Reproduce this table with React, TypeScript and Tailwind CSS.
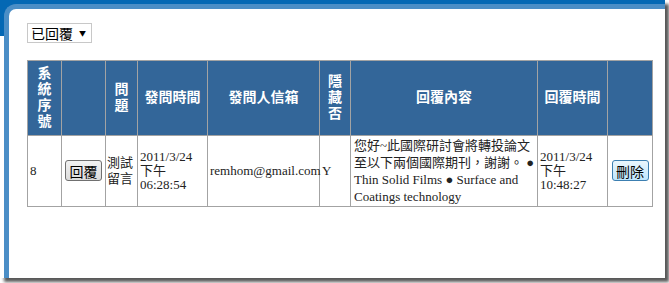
import React from "react";

const serif = "font-['Liberation_Serif','Noto_Sans_CJK_TC',serif]";

function HeadCell({ children, className = "" }: { children?: React.ReactNode; className?: string }) {
  return (
    <th className={`border border-[#a3a3a3] bg-[#336699] text-white font-bold text-[14px] leading-[16px] text-center align-middle px-[1px] ${className}`}>
      {children}
    </th>
  );
}

function Cell({ children, className = "" }: { children?: React.ReactNode; className?: string }) {
  return (
    <td className={`border border-[#a3a3a3] align-middle px-[2px] text-[13px] text-[#222] ${className}`}>
      {children}
    </td>
  );
}

export default function App() {
  return (
    <div className={`w-[669px] h-[283px] bg-white ${serif}`}>
      <div className="w-[665px] h-[278px] pt-[4px] pl-[4px] bg-[linear-gradient(#0468b4_0px,#0468b4_36px,#ffffff_36px)] shadow-[4px_4px_3px_rgba(0,0,0,0.65)]">
        <div className="h-full w-full border-l-[5px] border-t-[5px] border-[#4b8ec6] rounded-tl-[12px] bg-white pl-[18px] pt-[14px]">
          <div className="w-[65px] h-[20px] border border-[#c8c8c8] flex items-center justify-between pl-[3px] pr-[5px] font-['Noto_Sans_CJK_TC',sans-serif] text-[14px] leading-none text-black">
            <span>已回覆</span>
            <span className="text-[7px]">▼</span>
          </div>

          <table className="mt-[17px] table-fixed border-collapse w-[625px]">
            <colgroup>
              <col className="w-[34px]" />
              <col className="w-[44px]" />
              <col className="w-[32px]" />
              <col className="w-[70px]" />
              <col className="w-[112px]" />
              <col className="w-[31px]" />
              <col className="w-[187px]" />
              <col className="w-[70px]" />
              <col className="w-[45px]" />
            </colgroup>
            <thead>
              <tr className="h-[75px]">
                <HeadCell>系<br />統<br />序<br />號</HeadCell>
                <HeadCell />
                <HeadCell>問<br />題</HeadCell>
                <HeadCell>發問時間</HeadCell>
                <HeadCell>發問人信箱</HeadCell>
                <HeadCell>隱<br />藏<br />否</HeadCell>
                <HeadCell>回覆內容</HeadCell>
                <HeadCell>回覆時間</HeadCell>
                <HeadCell />
              </tr>
            </thead>
            <tbody>
              <tr className="h-[71px]">
                <Cell>8</Cell>
                <Cell className="text-center">
                  <button className="w-[37px] h-[21px] rounded-[3px] border border-[#707070] bg-[linear-gradient(#f2f2f2,#dcdcdc)] text-[14px] leading-none text-black font-['Noto_Sans_CJK_TC',sans-serif]">
                    回覆
                  </button>
                </Cell>
                <Cell className="leading-[16px] !px-[1px]">測試<br />留言</Cell>
                <Cell className="leading-[14px]">2011/3/24<br />下午<br />06:28:54</Cell>
                <Cell>remhom@gmail.com</Cell>
                <Cell>Y</Cell>
                <Cell className="leading-[17px] pl-[3px]">
                  您好~此國際研討會將轉投論文至以下兩個國際期刊，謝謝。 ● Thin Solid Films ● Surface and Coatings technology
                </Cell>
                <Cell className="leading-[14px]">2011/3/24<br />下午<br />10:48:27</Cell>
                <Cell className="text-center">
                  <button className="w-[37px] h-[21px] rounded-[3px] border border-[#3c7fb1] bg-[linear-gradient(#eaf6fd,#bee6fd)] text-[14px] leading-none text-black font-['Noto_Sans_CJK_TC',sans-serif]">
                    刪除
                  </button>
                </Cell>
              </tr>
            </tbody>
          </table>
        </div>
      </div>
    </div>
  );
}
